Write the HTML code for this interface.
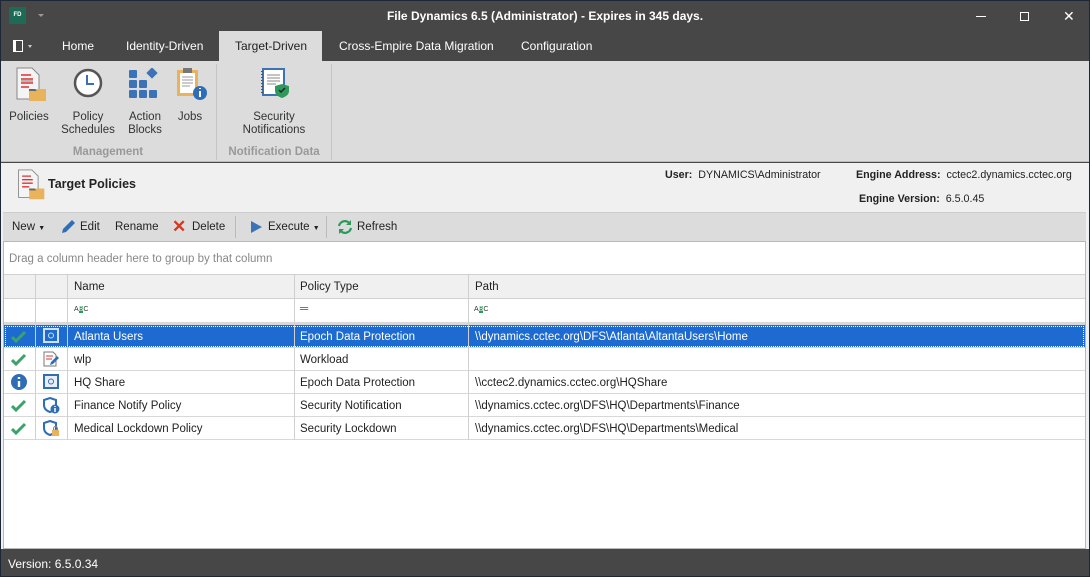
<!DOCTYPE html>
<html><head><meta charset="utf-8"><style>
*{margin:0;padding:0;box-sizing:border-box}
body{width:1090px;height:577px;overflow:hidden;background:#1c2838;font-family:"Liberation Sans",sans-serif;font-size:11.5px;color:#222;position:relative}
.a{position:absolute;white-space:nowrap}
.tab{position:absolute;top:31px;height:30px;line-height:30px;color:#fff;font-size:12px}
.rl{position:absolute;text-align:center;font-size:11.5px;color:#333;line-height:13px}
.cell{position:absolute;height:23px;line-height:22px}
.inf{font-size:10.7px}
</style></head><body>
<div class="a" style="left:1px;top:1px;width:1088px;height:575px;background:#474747"></div>
<div class="a" style="left:9px;top:7px;width:17px;height:17px;background:#1d6b55;color:#fff;font-size:6px;font-weight:bold;line-height:17px;text-align:center">FD</div>
<div class="a" style="left:38px;top:14px;width:0;height:0;border-left:3px solid transparent;border-right:3px solid transparent;border-top:3px solid #999"></div>
<div class="a" style="left:0;width:1090px;top:9px;text-align:center;color:#fff;font-weight:bold;font-size:12px">File Dynamics 6.5 (Administrator) - Expires in 345 days.</div>
<div class="a" style="left:976px;top:16px;width:10px;height:1px;background:#fff"></div>
<div class="a" style="left:1020px;top:12px;width:9px;height:9px;border:1px solid #fff"></div>
<div class="a" style="left:1063px;top:8px;color:#fff;font-size:14px">✕</div>
<div class="a" style="left:13px;top:40px;width:10px;height:12px;border:1.5px solid #fff;border-left-width:3px"></div>
<div class="a" style="left:28px;top:45px;border-left:2.5px solid transparent;border-right:2.5px solid transparent;border-top:3px solid #ccc"></div>
<div class="tab" style="left:62px">Home</div>
<div class="tab" style="left:126px">Identity-Driven</div>
<div class="a" style="left:219px;top:31px;width:103px;height:31px;background:#dcdcdc"></div>
<div class="tab" style="left:235px;color:#222">Target-Driven</div>
<div class="tab" style="left:339px">Cross-Empire Data Migration</div>
<div class="tab" style="left:521px">Configuration</div>
<div class="a" style="left:1px;top:61px;width:1088px;height:101px;background:#dcdcdc;border-bottom:1px solid #bbb"></div>
<div class="a" style="left:216px;top:64px;width:1px;height:96px;background:#c4c4c4"></div>
<div class="a" style="left:331px;top:64px;width:1px;height:96px;background:#c4c4c4"></div>
<svg class="a" style="left:15px;top:67px" width="32" height="36" viewBox="0 0 32 36"><path d="M2 1h15l7 7v24H2z" fill="#f4f4f4" stroke="#888"/><path d="M6 8h10M6 12h12M6 16h12M6 20h8" stroke="#d33" stroke-width="1.5"/><path d="M6 14h12" stroke="#777"/><rect x="14" y="22" width="17" height="12" fill="#e8b35a"/><path d="M14 22h6l2 2h-8z" fill="#666"/></svg>
<svg class="a" style="left:73px;top:68px" width="30" height="30"><circle cx="15" cy="15" r="13" fill="#fff" stroke="#555" stroke-width="2.5"/><path d="M14 7v9h7" stroke="#3a6fb5" stroke-width="2" fill="none"/></svg>
<svg class="a" style="left:128px;top:68px" width="32" height="32"><g fill="#3b73b6"><rect x="1" y="2" width="8" height="8" rx="1"/><rect x="1" y="12" width="8" height="8" rx="1"/><rect x="11" y="12" width="8" height="8" rx="1"/><rect x="1" y="22" width="8" height="8" rx="1"/><rect x="11" y="22" width="8" height="8" rx="1"/><rect x="21" y="22" width="8" height="8" rx="1"/><rect x="20" y="1" width="8" height="8" transform="rotate(45 24 5)"/></g></svg>
<svg class="a" style="left:176px;top:67px" width="32" height="34"><rect x="1" y="3" width="21" height="26" fill="#e8b35a"/><rect x="4" y="6" width="15" height="20" fill="#fff"/><rect x="7" y="1" width="9" height="5" fill="#777"/><path d="M6 10h11M6 13h11M6 16h11M6 19h8" stroke="#999"/><circle cx="24" cy="26" r="7" fill="#2f6db5"/><path d="M24 24v6M24 21v1" stroke="#fff" stroke-width="2"/></svg>
<svg class="a" style="left:260px;top:67px" width="32" height="34"><rect x="3" y="2" width="21" height="26" fill="#fff" stroke="#3b73b6" stroke-width="2"/><path d="M7 8h13M7 11h13M7 14h13M7 17h9" stroke="#888"/><path d="M2 4v22" stroke="#555" stroke-dasharray="1 2" stroke-width="2"/><path d="M22 17l7 2v5c0 4-4 6-7 7-3-1-7-3-7-7v-5z" fill="#2c9a5a"/><path d="M19 23l2 2 4-4" stroke="#222" stroke-width="1.5" fill="none"/></svg>
<div class="rl" style="left:8px;top:111px;width:42px">Policies</div>
<div class="rl" style="left:58px;top:111px;width:60px">Policy<br>Schedules</div>
<div class="rl" style="left:122px;top:111px;width:46px">Action<br>Blocks</div>
<div class="rl" style="left:172px;top:111px;width:36px">Jobs</div>
<div class="rl" style="left:225px;top:111px;width:98px">Security<br>Notifications</div>
<div class="rl" style="left:40px;top:146px;width:136px;color:#999;font-weight:bold">Management</div>
<div class="rl" style="left:217px;top:146px;width:114px;color:#999;font-weight:bold">Notification Data</div>
<div class="a" style="left:1px;top:163px;width:1088px;height:386px;background:#f0f0f0"></div>
<svg class="a" style="left:16px;top:169px" width="30" height="32" viewBox="0 0 32 36"><path d="M2 1h15l7 7v24H2z" fill="#f4f4f4" stroke="#888"/><path d="M6 8h10M6 12h12M6 16h12M6 20h8" stroke="#d33" stroke-width="1.5"/><rect x="14" y="22" width="17" height="12" fill="#e8b35a"/><path d="M14 22h6l2 2h-8z" fill="#666"/></svg>
<div class="a" style="left:48px;top:177px;font-size:12.5px;font-weight:bold;color:#222">Target Policies</div>
<div class="a inf" style="left:665px;top:169px"><b>User:</b>&nbsp; DYNAMICS\Administrator</div>
<div class="a inf" style="left:856px;top:169px"><b>Engine Address:</b>&nbsp; cctec2.dynamics.cctec.org</div>
<div class="a inf" style="left:859px;top:193px"><b>Engine Version:</b>&nbsp; 6.5.0.45</div>
<div class="a" style="left:3px;top:212px;width:1083px;height:29px;background:#dcdcdc;border-top:1px solid #ccc"></div>
<div class="a" style="left:12px;top:221px">New <span style="font-size:7px">▼</span></div>
<svg class="a" style="left:59px;top:218px" width="18" height="18"><path d="M3 15l1-4 9-9 3 3-9 9z" fill="#2f6db5"/></svg>
<div class="a" style="left:80px;top:221px">Edit</div>
<div class="a" style="left:115px;top:221px">Rename</div>
<div class="a" style="left:172px;top:217px;color:#d9361c;font-size:17px;font-weight:bold">✕</div>
<div class="a" style="left:192px;top:221px">Delete</div>
<div class="a" style="left:235px;top:216px;width:1px;height:22px;background:#bbb"></div>
<div class="a" style="left:251px;top:221px;border-top:6px solid transparent;border-bottom:6px solid transparent;border-left:11px solid #3b73b6"></div>
<div class="a" style="left:268px;top:221px">Execute <span style="font-size:7px">▼</span></div>
<div class="a" style="left:326px;top:216px;width:1px;height:22px;background:#bbb"></div>
<svg class="a" style="left:336px;top:218px" width="18" height="18"><path d="M3 8a6 6 0 0 1 11-2M15 10a6 6 0 0 1-11 2" stroke="#2c9a5a" stroke-width="2.2" fill="none"/><path d="M15 2v5h-5zM3 16v-5h5z" fill="#2c9a5a"/></svg>
<div class="a" style="left:357px;top:221px">Refresh</div>
<div class="a" style="left:3px;top:241px;width:1083px;height:308px;background:#fff;border:1px solid #b8b8b8"></div>
<div class="a" style="left:9px;top:253px;color:#888">Drag a column header here to group by that column</div>
<div class="a" style="left:4px;top:274px;width:1081px;height:25px;background:#f0f0f0;border-top:1px solid #d0d0d0;border-bottom:1px solid #d0d0d0"></div>
<div class="a" style="left:4px;top:322px;width:1081px;height:3px;background:#d8d8d8"></div>
<div class="a" style="left:74px;top:281px">Name</div>
<div class="a" style="left:300px;top:281px">Policy Type</div>
<div class="a" style="left:475px;top:281px">Path</div>
<div class="a" style="left:74px;top:306px;font-size:7px;color:#333">A<span style="background:#2c9a5a;color:#fff">B</span>C</div>
<div class="a" style="left:300px;top:303px;color:#666">═</div>
<div class="a" style="left:474px;top:306px;font-size:7px;color:#333">A<span style="background:#2c9a5a;color:#fff">B</span>C</div>
<div class="a" style="left:4px;top:325px;width:1081px;height:23px;background:#1d6bd0;outline:1px dotted #fff;outline-offset:-2px"></div>
<div class="a" style="left:4px;top:347px;width:1081px;height:1px;background:#d8d8d8"></div>
<div class="a" style="left:4px;top:370px;width:1081px;height:1px;background:#d8d8d8"></div>
<div class="a" style="left:4px;top:393px;width:1081px;height:1px;background:#d8d8d8"></div>
<div class="a" style="left:4px;top:416px;width:1081px;height:1px;background:#d8d8d8"></div>
<div class="a" style="left:4px;top:439px;width:1081px;height:1px;background:#d8d8d8"></div>
<div class="a" style="left:35px;top:275px;width:1px;height:165px;background:#d0d0d0"></div>
<div class="a" style="left:67px;top:275px;width:1px;height:165px;background:#d0d0d0"></div>
<div class="a" style="left:294px;top:275px;width:1px;height:165px;background:#d0d0d0"></div>
<div class="a" style="left:468px;top:275px;width:1px;height:165px;background:#d0d0d0"></div>
<div class="cell" style="left:74px;top:326px;color:#fff">Atlanta Users</div>
<div class="cell" style="left:300px;top:326px;color:#fff">Epoch Data Protection</div>
<div class="cell" style="left:475px;top:326px;color:#fff">\\dynamics.cctec.org\DFS\Atlanta\AltantaUsers\Home</div>
<div class="cell" style="left:74px;top:349px">wlp</div>
<div class="cell" style="left:300px;top:349px">Workload</div>
<div class="cell" style="left:74px;top:372px">HQ Share</div>
<div class="cell" style="left:300px;top:372px">Epoch Data Protection</div>
<div class="cell" style="left:475px;top:372px">\\cctec2.dynamics.cctec.org\HQShare</div>
<div class="cell" style="left:74px;top:395px">Finance Notify Policy</div>
<div class="cell" style="left:300px;top:395px">Security Notification</div>
<div class="cell" style="left:475px;top:395px">\\dynamics.cctec.org\DFS\HQ\Departments\Finance</div>
<div class="cell" style="left:74px;top:418px">Medical Lockdown Policy</div>
<div class="cell" style="left:300px;top:418px">Security Lockdown</div>
<div class="cell" style="left:475px;top:418px">\\dynamics.cctec.org\DFS\HQ\Departments\Medical</div>
<svg class="a" style="left:11px;top:330px" width="16" height="14"><path d="M1 7l4 4 9-9" stroke="#3aa36a" stroke-width="3" fill="none"/></svg>
<svg class="a" style="left:11px;top:353px" width="16" height="14"><path d="M1 7l4 4 9-9" stroke="#3aa36a" stroke-width="3" fill="none"/></svg>
<svg class="a" style="left:11px;top:374px" width="16" height="16"><circle cx="8" cy="8" r="8" fill="#2f6db5"/><path d="M8 7v6M8 3v2" stroke="#fff" stroke-width="2.4"/></svg>
<svg class="a" style="left:11px;top:399px" width="16" height="14"><path d="M1 7l4 4 9-9" stroke="#3aa36a" stroke-width="3" fill="none"/></svg>
<svg class="a" style="left:11px;top:422px" width="16" height="14"><path d="M1 7l4 4 9-9" stroke="#3aa36a" stroke-width="3" fill="none"/></svg>
<svg class="a" style="left:43px;top:328px" width="16" height="16"><rect x="1" y="1" width="14" height="13" fill="none" stroke="#cfe0f5" stroke-width="2"/><circle cx="8" cy="7.5" r="2.5" fill="none" stroke="#cfe0f5"/></svg>
<svg class="a" style="left:43px;top:351px" width="16" height="16"><path d="M1 1h9l3 3v11H1z" fill="#fff" stroke="#777"/><path d="M3 5h7M3 8h6" stroke="#d33"/><path d="M7 14l1-3 6-6 2 2-6 6z" fill="#2f6db5"/></svg>
<svg class="a" style="left:43px;top:374px" width="16" height="16"><rect x="1" y="1" width="14" height="13" fill="#e8eef7" stroke="#2f6db5" stroke-width="2"/><circle cx="8" cy="7.5" r="2.5" fill="none" stroke="#2f6db5"/></svg>
<svg class="a" style="left:43px;top:397px" width="17" height="17"><path d="M7 1l6 2v5c0 4-3 6-6 7-3-1-6-3-6-7V3z" fill="none" stroke="#2f6db5" stroke-width="2"/><circle cx="12" cy="12" r="4.5" fill="#2f6db5"/><path d="M12 11v4M12 9v1" stroke="#fff" stroke-width="1.5"/></svg>
<svg class="a" style="left:43px;top:420px" width="17" height="17"><path d="M7 1l6 2v5c0 4-3 6-6 7-3-1-6-3-6-7V3z" fill="none" stroke="#2f6db5" stroke-width="2"/><rect x="9" y="10" width="7" height="6" fill="#e8b35a"/><path d="M10.5 10V8.5a2 2 0 0 1 4 0V10" stroke="#888" fill="none"/></svg>
<div class="a" style="left:1px;top:549px;width:1088px;height:27px;background:#474747"></div>
<div class="a" style="left:8px;top:557px;color:#fff;font-size:12px">Version: 6.5.0.34</div>
</body></html>
